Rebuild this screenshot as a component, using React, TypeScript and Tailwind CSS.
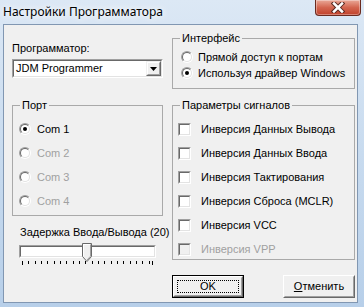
import React from "react";

const sunkenOuter = "border border-t-[#a0a0a0] border-l-[#a0a0a0] border-b-white border-r-white";
const sunkenInner = "border border-t-[#696969] border-l-[#696969] border-b-[#e3e3e3] border-r-[#e3e3e3]";

function Radio({ checked }: { checked?: boolean }) {
  return (
    <span className={`block w-[12px] h-[12px] shrink-0 rounded-full ${sunkenOuter}`}>
      <span className={`flex w-full h-full items-center justify-center rounded-full bg-white ${sunkenInner}`}>
        {checked && <span className="block w-[4px] h-[4px] rounded-full bg-black" />}
      </span>
    </span>
  );
}

function Check({ disabled }: { disabled?: boolean }) {
  return (
    <span className={`block w-[13px] h-[13px] shrink-0 ${sunkenOuter}`}>
      <span className={`block w-full h-full ${sunkenInner} ${disabled ? "bg-[#f0f0f0]" : "bg-white"}`} />
    </span>
  );
}

function Group({ title, className, children }: { title: string; className: string; children: React.ReactNode }) {
  return (
    <fieldset className={`border border-[#a9a9a9] ${className}`}>
      <legend className="ml-[7px] px-[2px] leading-[13px]">{title}</legend>
      {children}
    </fieldset>
  );
}

function Button({ children, isDefault }: { children: React.ReactNode; isDefault?: boolean }) {
  return (
    <div className={`w-[72px] h-[23px] ${isDefault ? "border border-black" : ""}`}>
      <div className="h-full border border-t-white border-l-white border-b-[#696969] border-r-[#696969]">
        <div className="h-full flex items-center justify-center bg-[#f0f0f0] border border-t-[#f0f0f0] border-l-[#f0f0f0] border-b-[#a0a0a0] border-r-[#a0a0a0]">
          {isDefault ? (
            <div className="w-[calc(100%-4px)] h-[calc(100%-4px)] flex items-center justify-center border border-dotted border-black">
              {children}
            </div>
          ) : (
            children
          )}
        </div>
      </div>
    </div>
  );
}

const signals = [
  "Инверсия Данных Вывода",
  "Инверсия Данных Ввода",
  "Инверсия Тактирования",
  "Инверсия Сброса (MCLR)",
  "Инверсия VCC",
];

export default function App() {
  const ticks: number[] = [];
  for (let v = 0; v <= 40; v += 2) ticks.push(v);
  ticks.push(41);

  return (
    <div className="w-[364px] h-[307px] overflow-hidden relative bg-gradient-to-b from-[#dce8f5] via-[#c8dbef] to-[#b7cfe9] font-['Liberation_Sans',Arial,sans-serif] text-[11px] leading-[13px] text-black">
      {/* title bar */}
      <div className="h-[24px] flex items-center pl-[3px] pb-[1px] font-['Noto_Sans',sans-serif] text-[12px] [text-shadow:0_0_6px_#fff,0_0_10px_#fff]">
        Настройки Программатора
      </div>
      <div className="absolute left-[315px] top-0 w-[46px] h-[16px] rounded-b-[4px] border border-t-0 border-[#6a2a1f] bg-gradient-to-b from-[#e9a898] via-[#d3654f] to-[#c0402a] flex items-center justify-center shadow-[inset_0_0_0_1px_rgba(255,255,255,0.35)]">
        <svg width="14" height="11" viewBox="0 0 14 11">
          <path d="M3 1.5 L11 9.5 M11 1.5 L3 9.5" stroke="#5a2a22" strokeWidth="4.5" strokeLinecap="square" />
          <path d="M3 1.5 L11 9.5 M11 1.5 L3 9.5" stroke="#fff" strokeWidth="2.5" strokeLinecap="square" />
        </svg>
      </div>

      {/* client area */}
      <div className="ml-[3px] w-[355px] h-[279px] border border-[#8197b2] bg-[#f0f0f0] flex pl-[8px] gap-[9px]">
        {/* left column */}
        <div className="w-[151px] flex flex-col pt-[17px]">
          <div>Программатор:</div>
          <div className={`mt-[4px] h-[19px] ${sunkenOuter}`}>
            <div className={`h-full flex items-center justify-between bg-white ${sunkenInner}`}>
              <span className="pl-[2px]">JDM Programmer</span>
              <span className="w-[15px] h-full flex border border-t-[#f0f0f0] border-l-[#f0f0f0] border-b-[#696969] border-r-[#696969]">
                <span className="flex-1 flex items-center justify-center bg-[#f0f0f0] border border-t-white border-l-white border-b-[#a0a0a0] border-r-[#a0a0a0]">
                  <svg width="7" height="4" viewBox="0 0 7 4">
                    <path d="M0 0 H7 L3.5 4 Z" fill="#000" />
                  </svg>
                </span>
              </span>
            </div>
          </div>

          <Group title="Порт" className="mt-[21px] h-[117px]">
            <div className="pt-[5px] pl-[6px]">
              {["Com 1", "Com 2", "Com 3", "Com 4"].map((c, i) => (
                <div key={c} className="h-[24px] flex items-center gap-[6px]">
                  <Radio checked={i === 0} />
                  <span className={i === 0 ? "" : "text-[#a0a0a0]"}>{c}</span>
                </div>
              ))}
            </div>
          </Group>

          <div className="mt-[10px] pl-[8px] whitespace-nowrap">Задержка Ввода/Вывода (20)</div>
          <div className={`relative mt-[6px] ml-[7px] w-[137px] h-[13px] ${sunkenOuter}`}>
            <div className={`h-full bg-white ${sunkenInner}`} />
            <svg className="absolute left-[62px] top-[-3px]" width="10" height="19" viewBox="0 0 10 19">
              <path d="M0.5 0.5 H9.5 V13.5 L5 18.5 L0.5 13.5 Z" fill="#f0f0f0" stroke="#696969" />
              <path d="M1.5 13 V1.5 H8.5" fill="none" stroke="#fff" />
              <path d="M8.5 1.5 V13.2 L5 17" fill="none" stroke="#a0a0a0" />
            </svg>
          </div>
          <svg className="mt-[3px]" width="151" height="6" viewBox="0 0 151 6">
            {ticks.map((v) => {
              const x = Math.round(10 + (v * 130) / 41) + 0.5;
              return <line key={v} x1={x} y1={0} x2={x} y2={v === 0 || v === 41 ? 4 : 3} stroke="#000" />;
            })}
          </svg>
        </div>

        {/* right column */}
        <div className="w-[183px] flex flex-col pt-[7px]">
          <Group title="Интерфейс" className="h-[57px]">
            <div className="pt-[4px] pl-[8px]">
              <div className="h-[16px] flex items-center gap-[5px]">
                <Radio />
                <span>Прямой доступ к портам</span>
              </div>
              <div className="h-[16px] flex items-center gap-[5px]">
                <Radio checked />
                <span>Используя драйвер Windows</span>
              </div>
            </div>
          </Group>

          <Group title="Параметры сигналов" className="mt-[10px] h-[161px]">
            <div className="pt-[5px] pl-[5px]">
              {signals.map((s) => (
                <div key={s} className="h-[24px] flex items-center gap-[10px]">
                  <Check />
                  <span>{s}</span>
                </div>
              ))}
              <div className="h-[24px] flex items-center gap-[10px]">
                <Check disabled />
                <span className="text-[#a0a0a0]">Инверсия VPP</span>
              </div>
            </div>
          </Group>

          <div className="mt-[15px] flex justify-between">
            <Button isDefault>OK</Button>
            <Button>
              <span>
                <span className="underline">О</span>тменить
              </span>
            </Button>
          </div>
        </div>
      </div>
    </div>
  );
}
